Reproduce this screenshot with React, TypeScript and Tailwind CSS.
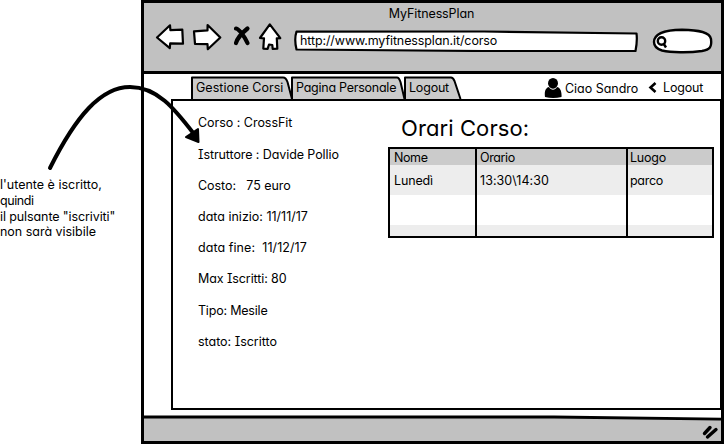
import type { ReactNode } from "react";

const details = [
  { text: "Corso : CrossFit", cls: "mb-4 tracking-[-0.03px]" },
  { text: "Istruttore : Davide Pollio", cls: "mb-[15px] tracking-[-0.09px]" },
  { text: "Costo:   75 euro", cls: "mb-[15px] tracking-[-0.06px]" },
  { text: "data inizio: 11/11/17", cls: "mb-[15px]" },
  { text: "data fine:  11/12/17", cls: "mb-[15px] tracking-[0.07px]" },
  { text: "Max Iscritti: 80", cls: "mb-4 tracking-[-0.1px]" },
  { text: "Tipo: Mesile", cls: "mb-[15px] tracking-[-0.2px]" },
  { text: "stato: Iscritto", cls: "tracking-[-0.02px]" },
];

function Tab({ width, box, shape, children }: { width: number; box: string; shape: string; children: ReactNode }) {
  return (
    <div className={`relative h-[25px] shrink-0 ${box}`}>
      <svg className="absolute left-0 top-0 overflow-visible" width={width} height="25" fill="#cbcbcb" stroke="#000" strokeWidth="2" strokeLinejoin="round">
        <path d={shape} />
      </svg>
      <span className="relative block whitespace-nowrap pl-[5px] pt-[4px] leading-4">{children}</span>
    </div>
  );
}

function Toolbar() {
  return (
    <header className="h-[71px] shrink-0 border-b-[3px] border-black bg-[#c1c1c1] pt-[2px]">
      <h1 className="pr-[2px] text-center leading-[17px] tracking-[-0.1px]">MyFitnessPlan</h1>
      <div className="flex items-start">
        <svg className="ml-[10px] shrink-0" width="138" height="34" viewBox="154 22 138 34" fill="#fff" stroke="#000" strokeWidth="2.2" strokeLinejoin="round" strokeLinecap="round">
          <path d="M157 37.5 L170 25.3 L170.4 30.2 L182.3 29.6 L183 43.7 L170.2 43.3 L169.8 48.2 Z" />
          <path d="M194 31.3 L207.5 30.4 L207.6 25 L220.3 37.5 L207.8 49.2 L207.5 44.2 L195 43.8 Z" />
          <path d="M236 28.5 C239 29 245 37 247.5 43 M247.5 28.5 C242 33 237.500 38 236 43" strokeWidth="4.2" fill="none" />
          <path d="M269.800 24.300 L280.300 38.200 L276.800 38.300 L277.300 48.700 L272.700 48.800 L272.300 45 L269 44.500 L267.600 48.800 L263.300 48.600 L264 38.300 L260 38 Z" />
        </svg>
        <div className="relative ml-[2px] mt-[8px] h-[22px] w-[344px] shrink-0">
          <svg className="absolute left-0 top-0" width="344" height="22" fill="#fff" stroke="#000" strokeWidth="2.2" strokeLinejoin="round">
            <path d="M2.500 1.700 L190 1.500 L342.500 3.500 Q343.500 11 341.500 21 L190 21 L2.500 19.500 Q0 9 2.500 1.700 Z" />
          </svg>
          <span className="relative block pl-[6px] pt-[3px] leading-4 tracking-[-0.11px]">http://www.myfitnessplan.it/corso</span>
        </div>
        <svg className="ml-[14px] mt-[6px] shrink-0" width="62" height="27" viewBox="652 28 62 27" fill="#fff" stroke="#000" strokeWidth="2.400">
          <path d="M654 42 C654 34 662 30 682 29.700 C699 30 710 32 711 39 C712 47 710 49.500 702 51 C688 53 671 52.500 662 50.500 C657 49 654 46 654 42 Z" />
          <circle cx="661.500" cy="41" r="3.700" />
          <path d="M663.500 43.500 L666 47.500" />
        </svg>
      </div>
    </header>
  );
}

function TabBar() {
  return (
    <nav className="flex h-[25px] shrink-0 pl-[47px] pt-[2px]">
      <Tab width={102} box="w-[100px] tracking-[0.03px]" shape="M1 23 V1.500 H92 Q95 1.500 96.500 6 L101 23">Gestione Corsi</Tab>
      <Tab width={114} box="w-[113px] tracking-[-0.25px]" shape="M1 23 V1.500 H106 Q108 1.500 109.500 6 L113.500 23">Pagina Personale</Tab>
      <Tab width={60} box="w-[60px] tracking-[-0.2px]" shape="M1 23 V1.500 H47 Q49 1.500 50.500 5 L56.500 23">Logout</Tab>
      <div className="ml-[80px] flex items-start">
        <svg width="18" height="21" viewBox="544 77 18 21" className="mt-px">
          <ellipse cx="553" cy="83.300" rx="5" ry="5.400" />
          <path d="M545 97 C544 90 546.500 87.500 549 87 C551 90.500 555 90.500 557 87 C560 87.500 562 91 561.500 97 Q553 98.800 545 97 Z" />
        </svg>
        <span className="ml-[3px] mt-[5px] w-[83px] whitespace-nowrap leading-4 tracking-[-0.03px]">Ciao Sandro</span>
        <svg width="10" height="13" viewBox="648 81 10 13" className="mt-[5px]" fill="none" stroke="#000" strokeWidth="2.600">
          <path d="M655.500 83 L650.500 87.500 L655.500 92" />
        </svg>
        <span className="ml-[5px] mt-[4px] leading-4 tracking-[-0.15px]">Logout</span>
      </div>
    </nav>
  );
}

function Schedule() {
  return (
    <section className="ml-[190px] w-[326px] shrink-0">
      <h2 className="pl-[13px] pt-[12px] text-[22px] leading-[30px] tracking-[0.1px]">Orari Corso:</h2>
      <div className="mt-[4px] flex h-[91px] flex-col border-[2.500px] border-black">
        <div className="grid flex-1 grid-cols-[87px_151px_1fr] divide-x-2 divide-black bg-[linear-gradient(#cbcbcb_16px,#ededed_16px,#ededed_46px,#fff_46px,#fff_76px,#ededed_76px)]">
          <div className="pl-[4px]">
            <div className="leading-[17px] tracking-[-0.4px]">Nome</div>
            <div className="pt-[7px] leading-4 tracking-[-0.15px]">Lunedì</div>
          </div>
          <div className="pl-[3px]">
            <div className="leading-[17px] tracking-[-0.4px]">Orario</div>
            <div className="pt-[7px] leading-4 tracking-[0.05px]">13:30\14:30</div>
          </div>
          <div className="pl-[2px]">
            <div className="leading-[17px] tracking-[-0.2px]">Luogo</div>
            <div className="pt-[7px] leading-4 tracking-[-0.3px]">parco</div>
          </div>
        </div>
      </div>
    </section>
  );
}

export default function App() {
  return (
    <div className="relative flex h-[445px] w-[725px] overflow-hidden bg-white font-['Inter','Noto_Sans',sans-serif] text-[12.500px] text-black [font-feature-settings:'cv11','cv08']">
      <aside className="w-[141px] shrink-0 whitespace-nowrap pt-[177px] leading-4">
        <p>l'utente è iscritto,</p>
        <p className="tracking-[-0.4px]">quindi</p>
        <p className="tracking-[-0.1px]">il pulsante "iscriviti"</p>
        <p className="leading-[14px] tracking-[-0.02px]">non sarà visibile</p>
      </aside>
      <main className="flex h-[444px] w-[583px] shrink-0 flex-col border-[3px] border-black">
        <Toolbar />
        <TabBar />
        <div className="ml-[27px] flex h-[311px] w-[551px] shrink-0 border-[2.500px] border-black">
          <ul className="w-0 whitespace-pre pl-[25px] pt-[14px] leading-4">
            {details.map((d) => (
              <li key={d.text} className={d.cls}>{d.text}</li>
            ))}
          </ul>
          <Schedule />
        </div>
        <footer className="relative mt-auto flex h-[26px] items-end justify-end bg-[#c1c1c1]">
          <svg className="absolute left-0 top-0" width="577" height="8" fill="#fff">
            <path d="M0 0 H577 V4 L430 1.500 H0 Z" />
            <path d="M0 2 H410 L577 4.200" fill="none" stroke="#000" strokeWidth="2.800" />
          </svg>
          <svg width="20" height="20" viewBox="702 421 20 20" stroke="#000" strokeWidth="3.400" strokeLinecap="round">
            <path d="M705.500 433.500 L711 427.500 M708.500 437 L717 429.500" />
          </svg>
        </footer>
      </main>
      <svg className="absolute left-0 top-0" width="210" height="180" fill="none" stroke="#000" strokeWidth="4" strokeLinecap="round">
        <path d="M50 168 C76 116 101 87 130 87 C157 87 174 108 194 134" />
        <path d="M198.500 142 L186 137 L198 129 Z" fill="#000" strokeWidth="2" strokeLinejoin="round" />
      </svg>
    </div>
  );
}
